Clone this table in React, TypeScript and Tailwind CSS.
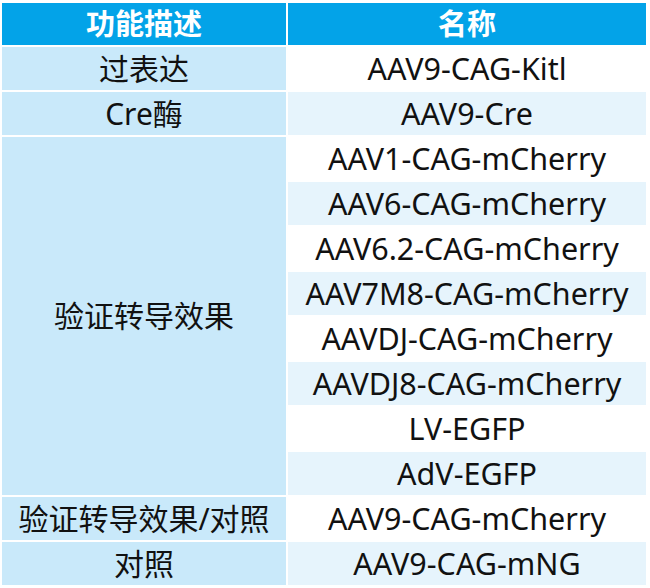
const rows: { desc?: string; span?: number; name: string; light: boolean }[] = [
  { desc: '过表达', name: 'AAV9-CAG-Kitl', light: false },
  { desc: 'Cre酶', name: 'AAV9-Cre', light: true },
  { desc: '验证转导效果', span: 8, name: 'AAV1-CAG-mCherry', light: false },
  { name: 'AAV6-CAG-mCherry', light: true },
  { name: 'AAV6.2-CAG-mCherry', light: false },
  { name: 'AAV7M8-CAG-mCherry', light: true },
  { name: 'AAVDJ-CAG-mCherry', light: false },
  { name: 'AAVDJ8-CAG-mCherry', light: true },
  { name: 'LV-EGFP', light: false },
  { name: 'AdV-EGFP', light: true },
  { desc: '验证转导效果/对照', name: 'AAV9-CAG-mCherry', light: false },
  { desc: '对照', name: 'AAV9-CAG-mNG', light: true },
];

export default function App() {
  return (
    <div
      className="h-[588px] w-[650px] bg-white pl-[2px] pt-[3px] text-[29px] text-[#111]"
      style={{ fontFamily: '"Noto Sans", "Noto Sans CJK SC", sans-serif' }}
    >
      <div className="grid grid-cols-[284px_358px] grid-rows-[42px] auto-rows-[43px] gap-[2px]">
        <div className="flex items-center justify-center bg-[#03a3e8] font-bold text-white">
          功能描述
        </div>
        <div className="flex items-center justify-center bg-[#03a3e8] font-bold text-white">
          名称
        </div>
        {rows.map((r, i) => (
          <>
            {r.desc && (
              <div
                key={`d${i}`}
                className={
                  'flex items-center justify-center bg-[#c9e9fa] text-[30px] leading-none ' +
                  (r.span === 8 ? 'row-span-8' : '')
                }
              >
                {r.desc}
              </div>
            )}
            <div
              key={`n${i}`}
              className={
                'flex items-center justify-center text-[30.5px] leading-none ' +
                (r.light ? 'bg-[#e6f4fc]' : 'bg-white')
              }
            >
              {r.name}
            </div>
          </>
        ))}
      </div>
    </div>
  );
}
